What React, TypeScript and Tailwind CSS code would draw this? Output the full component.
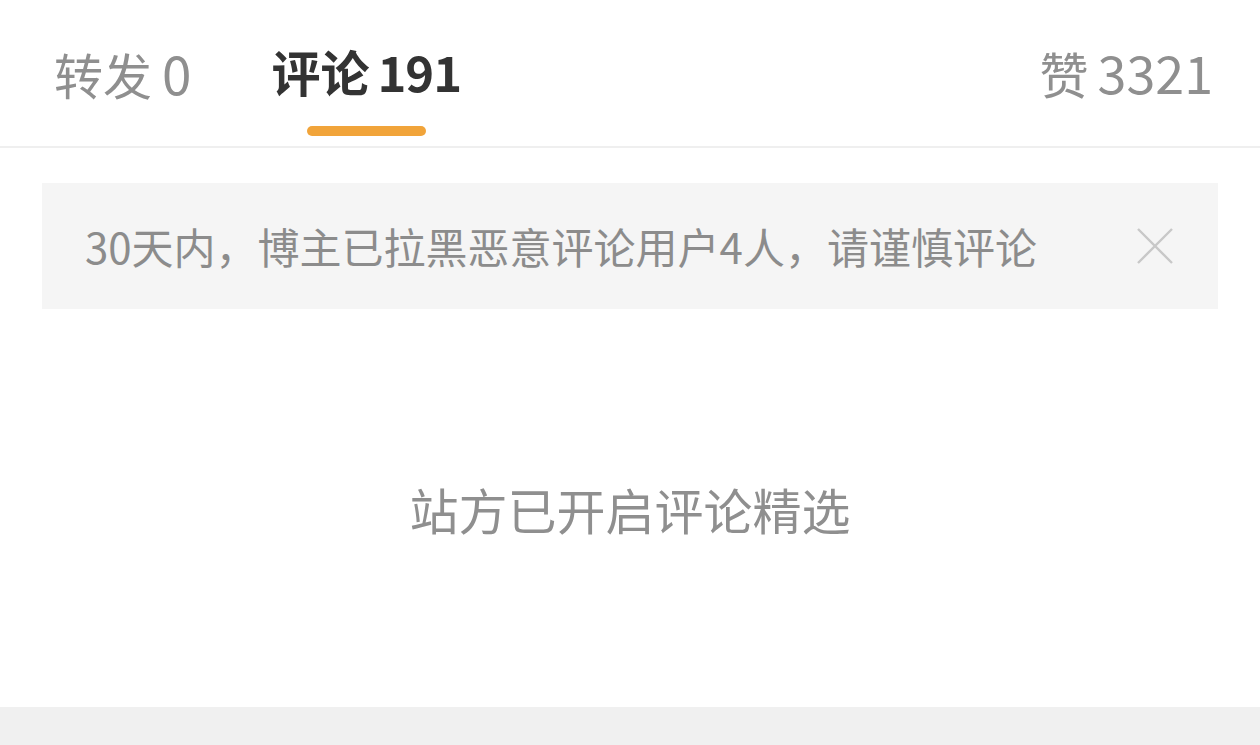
import React from "react";

const font = '"Noto Sans CJK SC", "Noto Sans", sans-serif';

function CloseIcon() {
  return (
    <svg width="38" height="38" viewBox="0 0 38 38" fill="none">
      <path d="M2 2L36 36M36 2L2 36" stroke="#c8c8c8" strokeWidth="2.4" />
    </svg>
  );
}

export default function App() {
  return (
    <div className="w-[1260px] h-[745px] bg-white flex flex-col overflow-hidden" style={{ fontFamily: font }}>
      {/* tab header */}
      <div className="h-[148px] border-b-2 border-[#efefef] flex items-start pl-[54px] pr-[47px]">
        <div className="flex items-start gap-[80px]">
          <div className="pt-[46px] text-[49px] text-[#8f8f8f] leading-none flex items-baseline">
            <span>转发</span>
            <span className="ml-[10px] text-[53px]">0</span>
          </div>
          <div className="flex flex-col items-center">
            <div className="pt-[46px] text-[49px] font-semibold text-[#333] leading-none flex items-baseline">
              <span>评论</span>
              <span className="ml-[8px] text-[49px] font-semibold tracking-[-1px]">191</span>
            </div>
            <div className="mt-[31px] w-[119px] h-[10px] rounded-full bg-[#f1a43a]" />
          </div>
        </div>
        <div className="ml-auto pt-[46px] text-[49px] text-[#8f8f8f] leading-none flex items-baseline">
          <span>赞</span>
          <span className="ml-[9px] text-[52px]">3321</span>
        </div>
      </div>

      {/* notice banner */}
      <div className="mx-[42px] mt-[35px] h-[126px] bg-[#f5f5f5] flex items-center pl-[43px] pr-[44px]">
        <div className="text-[42px] text-[#8c8c8c] leading-none">30天内，博主已拉黑恶意评论用户4人，请谨慎评论</div>
        <div className="ml-auto">
          <CloseIcon />
        </div>
      </div>

      {/* empty state */}
      <div className="flex-1 flex items-center justify-center">
        <div className="text-[49px] text-[#8f8f8f] leading-none">站方已开启评论精选</div>
      </div>

      <div className="h-[38px] bg-[#f0f0f0]" />
    </div>
  );
}
